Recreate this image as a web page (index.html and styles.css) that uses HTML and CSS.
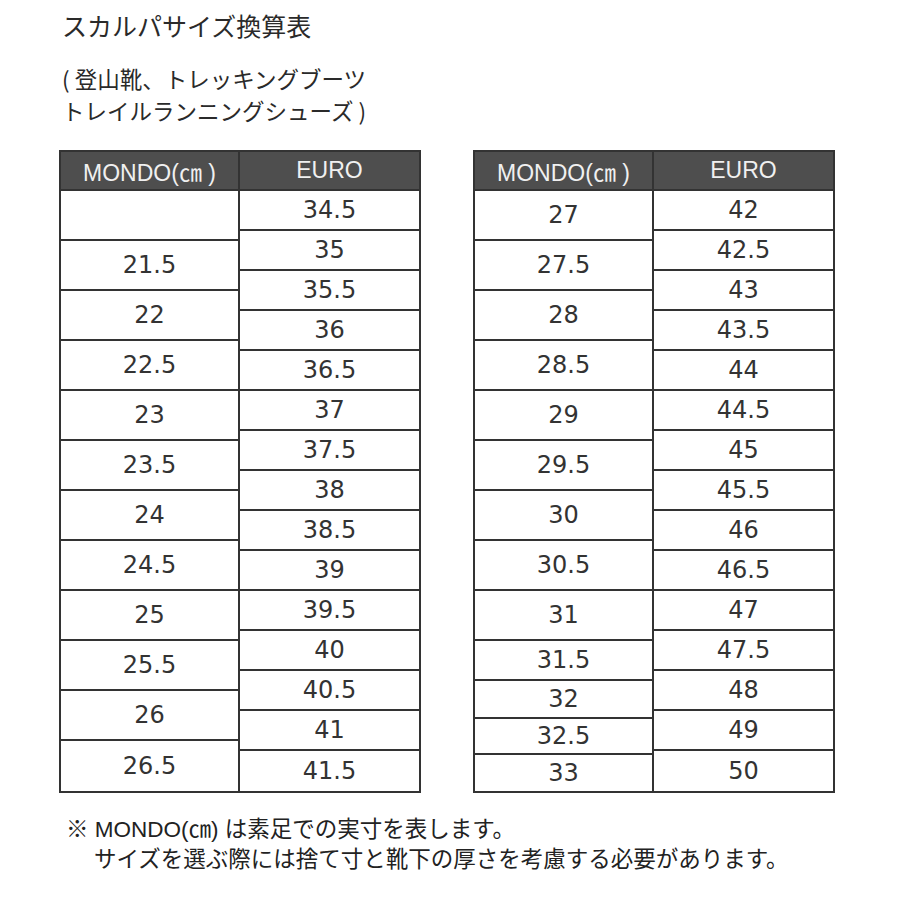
FILE: index.html
```html
<!DOCTYPE html>
<html lang="ja">
<head>
<meta charset="utf-8">
<title>スカルパサイズ換算表</title>
<link rel="stylesheet" href="styles.css">
</head>
<body>
<div class="page">
  <h1 class="title">スカルパサイズ換算表</h1>
  <p class="sub">( 登山靴、トレッキングブーツ<br>トレイルランニングシューズ )</p>

  <div class="tables">
    <div class="chart">
      <div class="head"><div class="hc">MONDO(㎝ )</div><div class="hc">EURO</div></div>
      <div class="body">
        <div class="col mondo">
          <div class="cell h50"></div>
          <div class="cell h50">21.5</div>
          <div class="cell h50">22</div>
          <div class="cell h50">22.5</div>
          <div class="cell h50">23</div>
          <div class="cell h50">23.5</div>
          <div class="cell h50">24</div>
          <div class="cell h50">24.5</div>
          <div class="cell h50">25</div>
          <div class="cell h50">25.5</div>
          <div class="cell h50">26</div>
          <div class="cell h50">26.5</div>
        </div>
        <div class="col euro">
          <div class="cell h40">34.5</div>
          <div class="cell h40">35</div>
          <div class="cell h40">35.5</div>
          <div class="cell h40">36</div>
          <div class="cell h40">36.5</div>
          <div class="cell h40">37</div>
          <div class="cell h40">37.5</div>
          <div class="cell h40">38</div>
          <div class="cell h40">38.5</div>
          <div class="cell h40">39</div>
          <div class="cell h40">39.5</div>
          <div class="cell h40">40</div>
          <div class="cell h40">40.5</div>
          <div class="cell h40">41</div>
          <div class="cell h40">41.5</div>
        </div>
      </div>
    </div>

    <div class="chart">
      <div class="head"><div class="hc">MONDO(㎝ )</div><div class="hc">EURO</div></div>
      <div class="body">
        <div class="col mondo">
          <div class="cell h50">27</div>
          <div class="cell h50">27.5</div>
          <div class="cell h50">28</div>
          <div class="cell h50">28.5</div>
          <div class="cell h50">29</div>
          <div class="cell h50">29.5</div>
          <div class="cell h50">30</div>
          <div class="cell h50">30.5</div>
          <div class="cell h50">31</div>
          <div class="cell h40">31.5</div>
          <div class="cell h38">32</div>
          <div class="cell h36">32.5</div>
          <div class="cell h36">33</div>
        </div>
        <div class="col euro">
          <div class="cell h40">42</div>
          <div class="cell h40">42.5</div>
          <div class="cell h40">43</div>
          <div class="cell h40">43.5</div>
          <div class="cell h40">44</div>
          <div class="cell h40">44.5</div>
          <div class="cell h40">45</div>
          <div class="cell h40">45.5</div>
          <div class="cell h40">46</div>
          <div class="cell h40">46.5</div>
          <div class="cell h40">47</div>
          <div class="cell h40">47.5</div>
          <div class="cell h40">48</div>
          <div class="cell h40">49</div>
          <div class="cell h40">50</div>
        </div>
      </div>
    </div>
  </div>

  <div class="note">
    <p class="note-line">※ MONDO(㎝) は素足での実寸を表します。</p>
    <p class="note-line indent">サイズを選ぶ際には捨て寸と靴下の厚さを考慮する必要があります。</p>
  </div>
</div>
</body>
</html>
```

FILE: styles.css
```css
html, body {
  margin: 0;
  padding: 0;
  background: #ffffff;
}

body {
  font-family: "Noto Sans CJK JP", "Noto Sans", sans-serif;
  color: #2e2e2e;
}

.page {
  width: 900px;
  height: 900px;
  box-sizing: border-box;
  padding-left: 59px;
}

.title {
  margin: 10px 0 0 3px;
  font-size: 25px;
  line-height: 30px;
  font-weight: normal;
  color: #2a2a2a;
}

.sub {
  margin: 22px 0 0 3px;
  font-size: 22.5px;
  line-height: 32px;
  color: #2a2a2a;
}

.tables {
  display: flex;
  gap: 52px;
  margin-top: 24px;
}

.chart {
  width: 362px;
  border: 2px solid #333;
  box-sizing: border-box;
}

.head {
  display: grid;
  grid-template-columns: 1fr 1fr;
  height: 39px;
  box-sizing: border-box;
  border-bottom: 2px solid #333;
  background: #4e4e4e;
}

.hc {
  display: flex;
  align-items: center;
  justify-content: center;
  color: #f0f0f0;
  font-family: "Liberation Sans", "Noto Sans CJK JP", sans-serif;
  font-size: 23px;
}

.hc:first-child {
  border-right: 2px solid #333;
}

.body {
  display: grid;
  grid-template-columns: 1fr 1fr;
  height: 600px;
}

.col {
  display: flex;
  flex-direction: column;
}

.mondo {
  border-right: 2px solid #333;
}

.cell {
  display: flex;
  align-items: center;
  justify-content: center;
  box-sizing: border-box;
  border-bottom: 2px solid #333;
  font-family: "DejaVu Sans", sans-serif;
  font-size: 24px;
  color: #333;
}

.cell:last-child {
  border-bottom: none;
}

.h50 { height: 50px; }
.h40 { height: 40px; }
.h38 { height: 38px; }
.h36 { height: 36px; }

.note {
  margin-top: 22px;
}

.note-line {
  margin: 0 0 0 7px;
  font-family: "Liberation Sans", "Noto Sans CJK JP", sans-serif;
  font-size: 22.5px;
  line-height: 30px;
  color: #222;
}

.note-line.indent {
  padding-left: 28px;
}
```
